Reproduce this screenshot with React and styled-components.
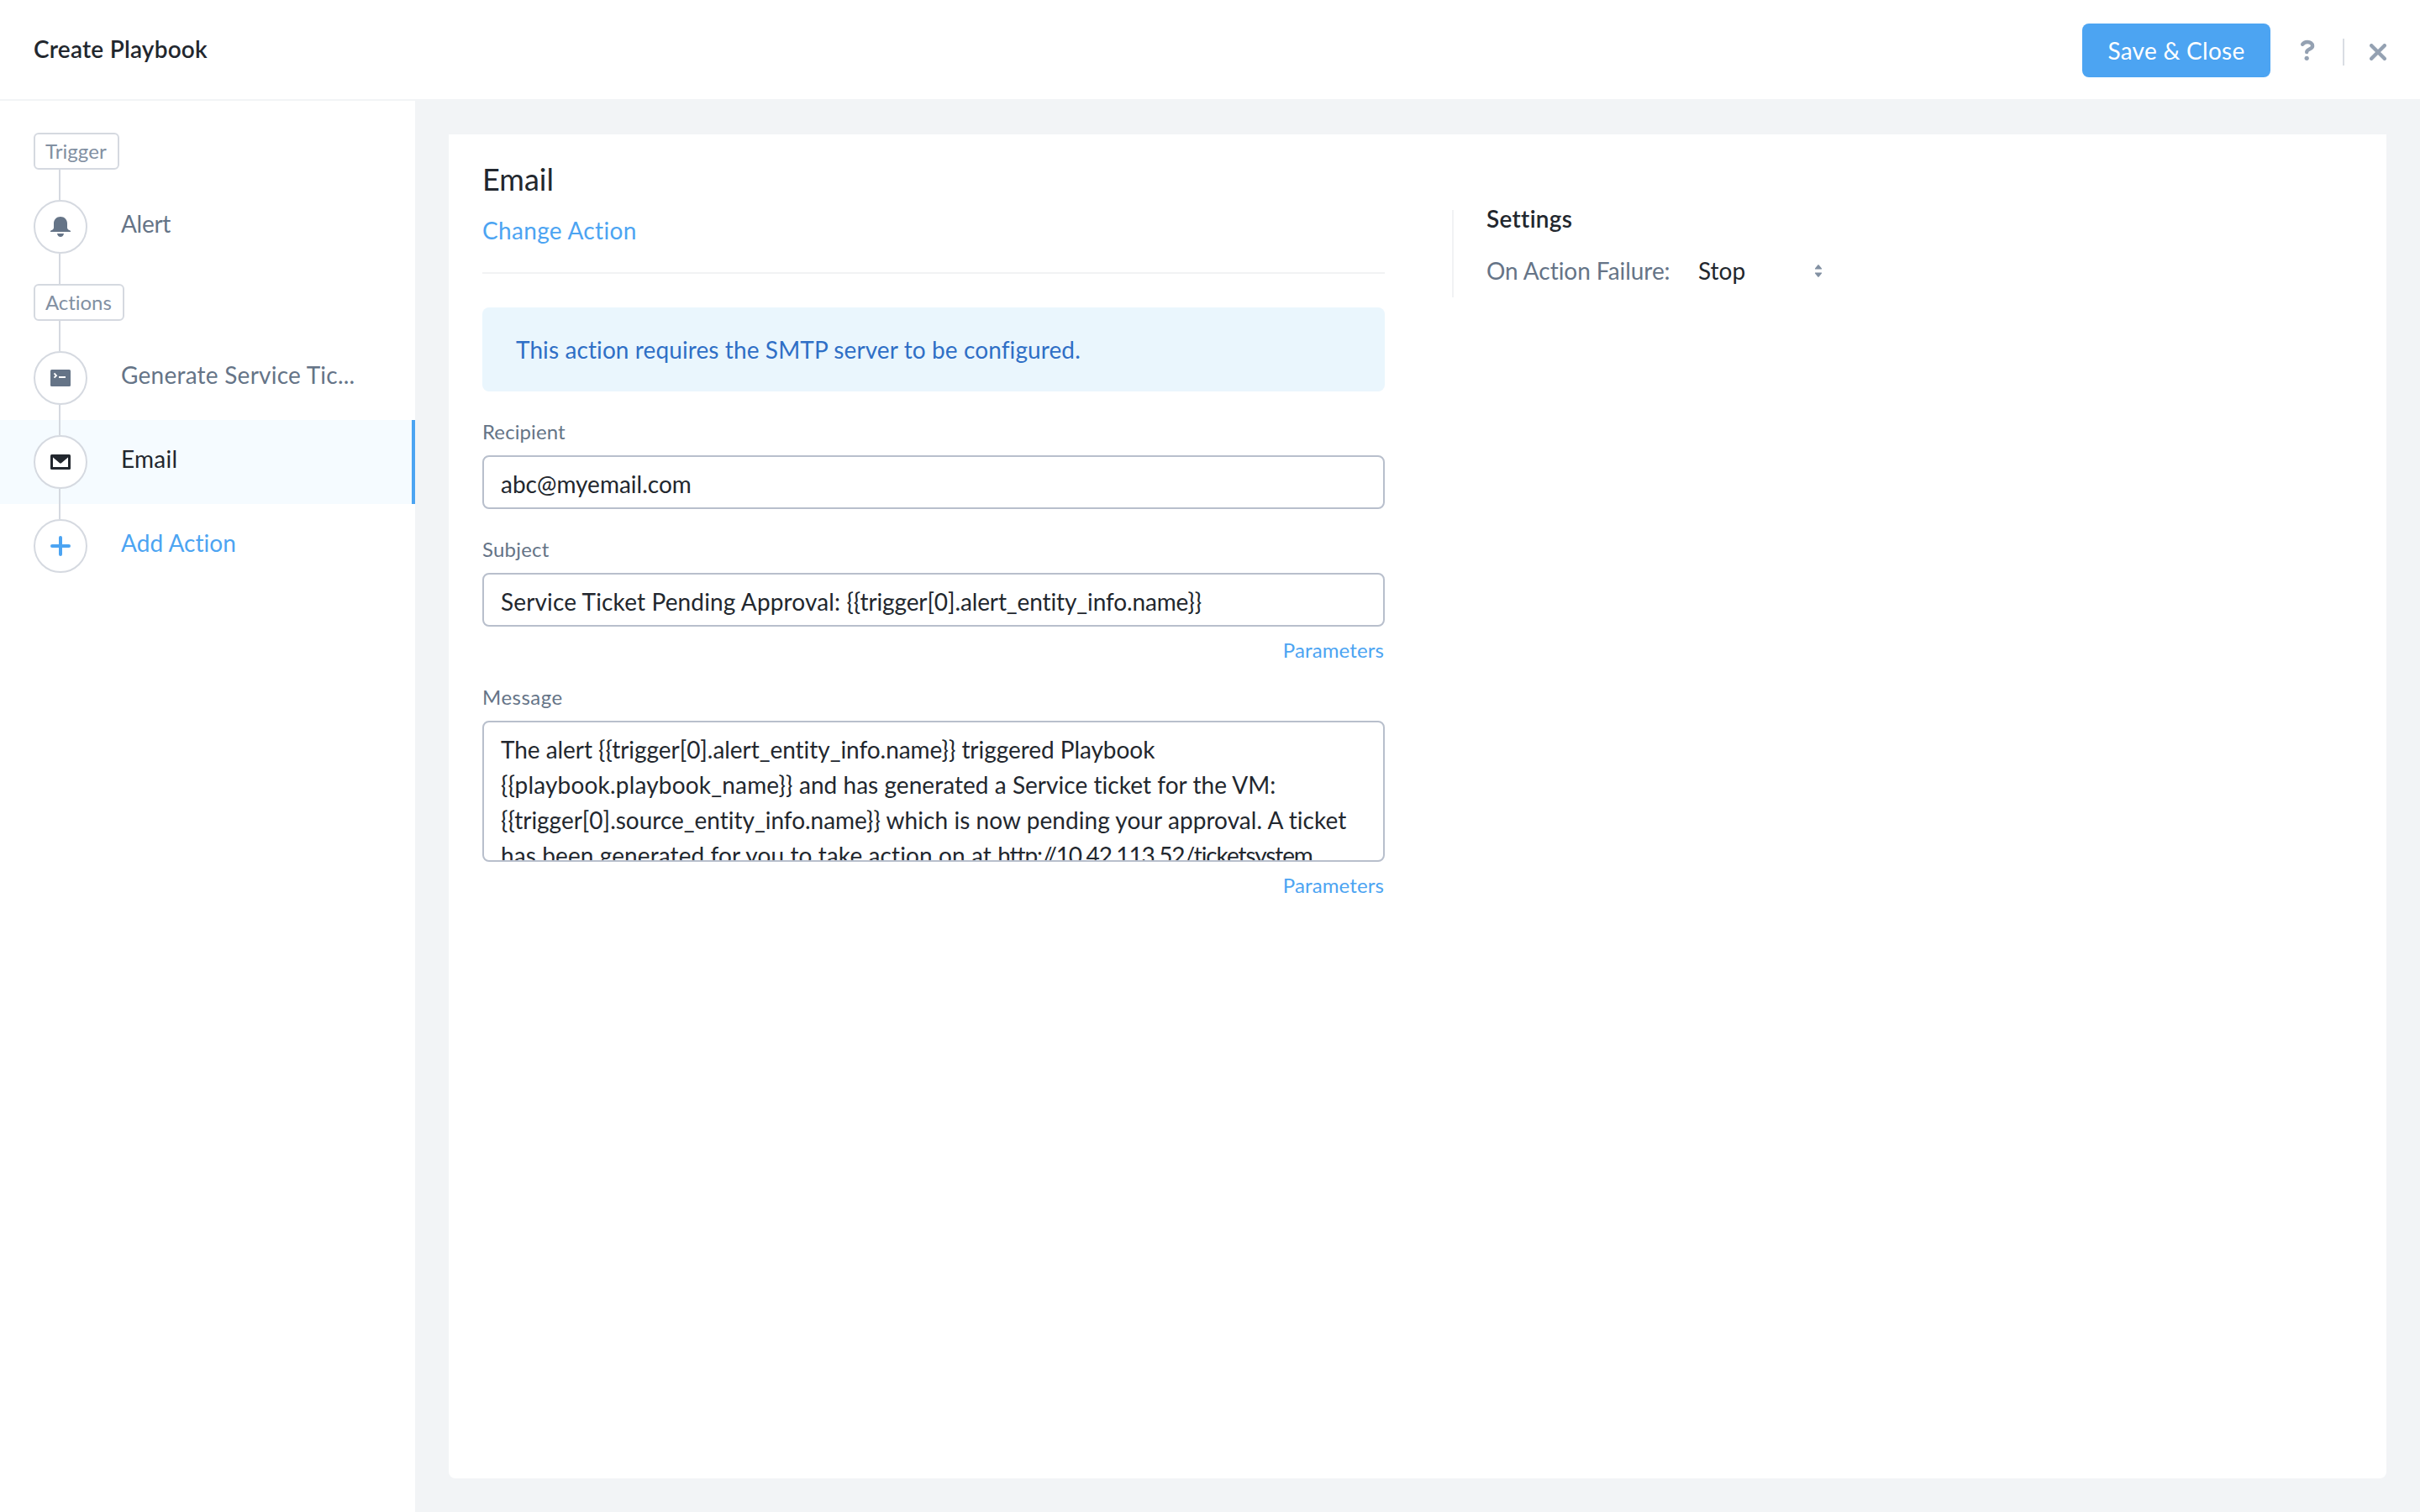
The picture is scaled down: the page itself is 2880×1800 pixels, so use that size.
import React from 'react';
import styled, { createGlobalStyle } from 'styled-components';

const GlobalStyle = createGlobalStyle`
  * {
    box-sizing: border-box;
  }

  body {
    margin: 0;
    background: #f2f4f6;
    color: #22272e;
    font-family: Lato, "Liberation Sans", sans-serif;
    font-size: 28px;
    line-height: 40px;
    font-variant-ligatures: none;
  }
`;

const Page = styled.div`
  display: flex;
  flex-direction: column;
  height: 1800px;
  overflow: hidden;
`;

const Header = styled.header`
  display: flex;
  justify-content: space-between;
  flex: none;
  height: 120px;
  padding: 0 40px;
  background: #fff;
  border-bottom: 2px solid #f2f4f6;
`;

const Title = styled.h1`
  margin: 38px 0 0;
  font-size: 28px;
  font-weight: 600;
  letter-spacing: 0.22px;
`;

const HeaderActions = styled.div`
  display: flex;
  align-items: center;
  height: 64px;
  margin-top: 28px;
`;

const SaveButton = styled.button`
  width: 224px;
  height: 64px;
  margin-right: 34px;
  padding: 0;
  border: none;
  border-radius: 8px;
  background: #4ca4f2;
  color: #fff;
  font: inherit;
  line-height: 62px;
  letter-spacing: 0.27px;
`;

const HeaderDivider = styled.div`
  width: 2px;
  height: 32px;
  margin: 4px 30px 0 32px;
  background: #d9dde3;
`;

const HeaderIcon = styled.svg`
  display: block;
  fill: none;
  stroke: #94a1b2;
  stroke-width: 4.4;
  stroke-linecap: round;
  margin-top: ${props => props.$drop || 0}px;
`;

const Body = styled.div`
  display: flex;
  flex: 1;
`;

const Sidebar = styled.nav`
  width: 494px;
  padding-top: 20px;
  background: #fff;
`;

const BadgeRow = styled.div`
  display: flex;
  flex-direction: column;
  align-items: flex-start;
  height: 80px;
  padding-left: 40px;
`;

const Badge = styled.div`
  height: 44px;
  padding: 0 13px 0 12px;
  border: 2px solid #d5d9e0;
  border-radius: 6px;
  color: #8290a2;
  font-size: 24px;
  line-height: 39px;
  letter-spacing: ${props => props.$spacing}px;
`;

const Step = styled.div`
  display: flex;
  height: 100px;
  padding-left: 40px;
  background: ${props => (props.$active ? '#f5fbff' : 'transparent')};
  border-right: ${props => (props.$active ? '4px solid #4ca4f2' : 'none')};
`;

const StepTrack = styled.div`
  width: 64px;
  margin-right: 40px;
`;

const Connector = styled.div`
  width: 2px;
  height: 18px;
  margin-left: 30px;
  background: ${props => (props.$hidden ? 'transparent' : '#d5d9e0')};
`;

const StepCircle = styled.div`
  display: flex;
  align-items: center;
  justify-content: center;
  height: 64px;
  border: 2px solid #d5d9e0;
  border-radius: 50%;
  background: #fff;
  color: ${props => props.$color};
`;

const StepLabel = styled.div`
  padding-top: 26px;
  color: ${props => props.$color};
  letter-spacing: ${props => props.$spacing}px;
  white-space: nowrap;
`;

const Main = styled.main`
  flex: 1;
  padding: 40px;
`;

const Panel = styled.section`
  display: flex;
  align-items: flex-start;
  height: 1600px;
  padding: 29px 40px 0;
  background: #fff;
  border-radius: 0 0 8px 8px;
`;

const Form = styled.div`
  width: 1074px;
`;

const FormTitle = styled.h2`
  margin: 0 0 17px;
  font-size: 36px;
  font-weight: 400;
  line-height: 48px;
`;

const ChangeAction = styled.div`
  height: 72px;
  border-bottom: 2px solid #f1f2f4;
  color: #4ca4f2;
  letter-spacing: 0.32px;
`;

const Notice = styled.div`
  height: 100px;
  margin-top: 40px;
  padding-left: 40px;
  border-radius: 8px;
  background: #eaf6fd;
  color: #2f6fc6;
  line-height: 100px;
  letter-spacing: 0.1px;
`;

const Field = styled.div`
  margin-top: 30px;
`;

const FieldLabel = styled.div`
  margin-bottom: 10px;
  color: #657487;
  font-size: 24px;
  line-height: 36px;
  letter-spacing: ${props => props.$spacing}px;
`;

const TextInput = styled.div`
  height: 64px;
  padding: 1px 20px 0;
  border: 2px solid #b8bfcc;
  border-radius: 8px;
  line-height: 62px;
  white-space: pre;
`;

const TextArea = styled.div`
  height: 168px;
  padding: 11px 0 0 20px;
  border: 2px solid #b8bfcc;
  border-radius: 8px;
  line-height: 42px;
  overflow: hidden;
`;

const Line = styled.div`
  white-space: pre;
`;

const Run = styled.span`
  letter-spacing: ${props => props.$spacing}px;
`;

const ParametersLink = styled.div`
  margin: 19px 0 -1px;
  padding-right: 1px;
  color: #4ca4f2;
  font-size: 24px;
  line-height: 18px;
  letter-spacing: 0.12px;
  text-align: right;
`;

const Settings = styled.aside`
  height: 104px;
  margin: 61px 0 0 80px;
  padding-left: 39px;
  border-left: 2px solid #f1f2f4;
`;

const SettingsTitle = styled.h3`
  margin: 0 0 32px;
  font-size: 28px;
  font-weight: 600;
  line-height: 20px;
  letter-spacing: 0.3px;
`;

const SettingRow = styled.div`
  display: flex;
  align-items: center;
`;

const SettingName = styled.div`
  width: 252px;
  color: #657487;
  letter-spacing: -0.05px;
`;

const SettingValue = styled.div`
  width: 139px;
`;

const BellIcon = () => (
  <svg width="24" height="24" viewBox="0 0 24 24" fill="currentColor">
    <path d="M12 0C7.4 0 4 3.4 4 8v5c0 1.6-1.2 2.6-3.1 3.2-.6.2-.9.6-.9 1.1V18h24v-.7c0-.5-.3-.9-.9-1.1C21.2 15.6 20 14.6 20 13V8c0-4.6-3.4-8-8-8z" />
    <path d="M8 20h8c-.4 2.4-2 4-4 4s-3.6-1.6-4-4z" />
  </svg>
);

const TerminalIcon = () => (
  <svg width="24" height="20" viewBox="0 0 24 20">
    <rect width="24" height="20" rx="1.5" fill="currentColor" />
    <path d="M4.5 4.4 7 7.1 4.5 9.6" fill="none" stroke="#fff" strokeWidth="1.9" />
    <path d="M10 9h8" stroke="#fff" strokeWidth="2" />
  </svg>
);

const MailIcon = () => (
  <svg width="24" height="18" viewBox="0 0 24 18">
    <rect width="24" height="18" rx="1.5" fill="currentColor" />
    <path d="M3 3.6 11 10.3q1 .8 2 0L21 3.6V15H3z" fill="#fff" />
  </svg>
);

const PlusIcon = () => (
  <svg width="24" height="24" viewBox="0 0 24 24" stroke="currentColor" strokeWidth="4" strokeLinecap="round">
    <path d="M12 2v20M2 12h20" />
  </svg>
);

const SortIcon = () => (
  <svg width="8" height="15" viewBox="0 0 8 15" fill="#8290a2">
    <path d="M3.3.4a1 1 0 0 1 1.4 0L8 4.6V5.5H0V4.6zM3.3 14.6a1 1 0 0 0 1.4 0L8 10.4V9.5H0v.9z" />
  </svg>
);

const WorkflowStep = ({ icon, label, color, spacing, active, last }) => (
  <Step $active={active}>
    <StepTrack>
      <Connector />
      <StepCircle $color={color}>{icon}</StepCircle>
      <Connector $hidden={last} />
    </StepTrack>
    <StepLabel $color={color} $spacing={spacing}>{label}</StepLabel>
  </Step>
);

// each line is a list of [text, letter spacing]
const message = [
  [['The alert {{trigger[0].alert_entity_info.name}} triggered Playbook', -0.05]],
  [['{{playbook.playbook_name}}', 0.18], [' and has generated a Service ticket for the VM:', 0.04]],
  [['{{trigger[0].source_entity_info.name}}', -0.02], [' which is now pending your approval. A ticket', 0.06]],
  [['has been generated for you to take action on at ', 0.1], ['http://10.42.113.52/ticketsystem.', -1.1]],
];

const App = () => {
  return (
    <Page>
      <GlobalStyle />
      <Header>
        <Title>Create Playbook</Title>
        <HeaderActions>
          <SaveButton>Save &amp; Close</SaveButton>
          <HeaderIcon width="20" height="28" viewBox="0 0 20 28">
            <path d="M4.2 6.8C5.5 4.8 7.7 4 9.9 4c3.6 0 6.2 1.7 6.2 4.7C16.1 13 9.2 12 9.2 16" />
            <circle cx="9.2" cy="23.3" r="2.6" fill="#94a1b2" stroke="none" />
          </HeaderIcon>
          <HeaderDivider />
          <HeaderIcon $drop={4} width="20" height="20" viewBox="0 0 20 20">
            <path d="M2.2 2.2l15.6 15.6M17.8 2.2L2.2 17.8" />
          </HeaderIcon>
        </HeaderActions>
      </Header>

      <Body>
        <Sidebar>
          <BadgeRow>
            <Connector $hidden />
            <Badge $spacing={0.1}>Trigger</Badge>
            <Connector />
          </BadgeRow>
          <WorkflowStep icon={<BellIcon />} label="Alert" color="#657487" spacing={-0.3} />
          <BadgeRow>
            <Connector />
            <Badge $spacing={-0.05}>Actions</Badge>
            <Connector />
          </BadgeRow>
          <WorkflowStep icon={<TerminalIcon />} label="Generate Service Tic..." color="#657487" spacing={0.24} />
          <WorkflowStep icon={<MailIcon />} label="Email" color="#22272e" spacing={0.25} active />
          <WorkflowStep icon={<PlusIcon />} label="Add Action" color="#4ca4f2" spacing={0.05} last />
        </Sidebar>

        <Main>
          <Panel>
            <Form>
              <FormTitle>Email</FormTitle>
              <ChangeAction>Change Action</ChangeAction>
              <Notice>This action requires the SMTP server to be configured.</Notice>

              <Field>
                <FieldLabel $spacing={0.1}>Recipient</FieldLabel>
                <TextInput>abc@myemail.com</TextInput>
              </Field>

              <Field>
                <FieldLabel $spacing={0.2}>Subject</FieldLabel>
                <TextInput>
                  <Run $spacing={0.14}>{'Service Ticket Pending Approval: '}</Run>
                  <Run $spacing={-0.12}>{'{{trigger[0].alert_entity_info.name}}'}</Run>
                </TextInput>
                <ParametersLink>Parameters</ParametersLink>
              </Field>

              <Field>
                <FieldLabel $spacing={0.5}>Message</FieldLabel>
                <TextArea>
                  {message.map((runs, i) => (
                    <Line key={i}>
                      {runs.map(([text, spacing]) => (
                        <Run key={text} $spacing={spacing}>{text}</Run>
                      ))}
                    </Line>
                  ))}
                </TextArea>
                <ParametersLink>Parameters</ParametersLink>
              </Field>
            </Form>

            <Settings>
              <SettingsTitle>Settings</SettingsTitle>
              <SettingRow>
                <SettingName>On Action Failure:</SettingName>
                <SettingValue>Stop</SettingValue>
                <SortIcon />
              </SettingRow>
            </Settings>
          </Panel>
        </Main>
      </Body>
    </Page>
  );
};

export default App;
